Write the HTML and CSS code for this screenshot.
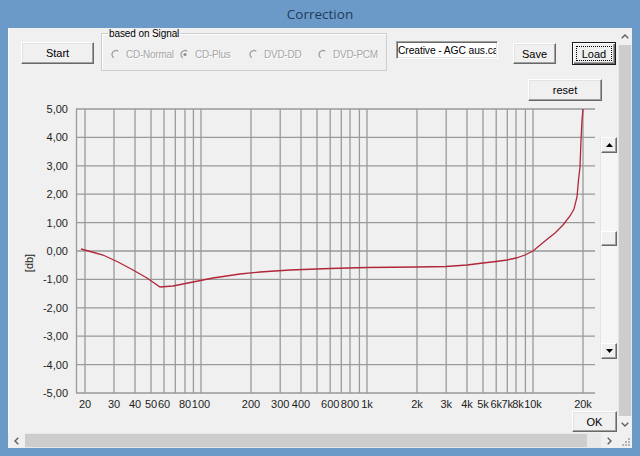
FILE: index.html
```html
<!DOCTYPE html>
<html>
<head>
<meta charset="utf-8">
<title>Correction</title>
<link rel="stylesheet" href="styles.css">
</head>
<body>
<div class="window">
  <div class="titlebar">Correction</div>
  <div class="frame">
    <div class="content">
      <div class="toprow">
        <button class="btn btn-start">Start</button>
        <fieldset class="group">
          <legend>based on Signal</legend>
          <div class="radios">
            <span class="radio"><svg width="12" height="13" viewBox="0 0 12 13"><path d="M8.3 3.2 A4 4 0 1 0 3.7 9.8" fill="none" stroke="#9c9c9c" stroke-width="1.2"/></svg>CD-Normal</span>
            <span class="radio"><svg width="12" height="13" viewBox="0 0 12 13"><path d="M8.3 3.2 A4 4 0 1 0 3.7 9.8" fill="none" stroke="#9c9c9c" stroke-width="1.2"/><circle cx="6" cy="6.5" r="1.6" fill="#8e8e8e"/></svg>CD-Plus</span>
            <span class="radio"><svg width="12" height="13" viewBox="0 0 12 13"><path d="M8.3 3.2 A4 4 0 1 0 3.7 9.8" fill="none" stroke="#9c9c9c" stroke-width="1.2"/></svg>DVD-DD</span>
            <span class="radio"><svg width="12" height="13" viewBox="0 0 12 13"><path d="M8.3 3.2 A4 4 0 1 0 3.7 9.8" fill="none" stroke="#9c9c9c" stroke-width="1.2"/></svg>DVD-PCM</span>
          </div>
        </fieldset>
        <input class="file" type="text" value="Creative - AGC aus.car">
        <button class="btn btn-save">Save</button>
        <button class="btn btn-load"><span class="focus">Load</span></button>
      </div>
      <div class="resetrow">
        <button class="btn btn-reset">reset</button>
      </div>
      <div class="mainrow">
        <svg class="chart" width="592" height="310" viewBox="8 101 592 310">
          <g class="grid" stroke="#9a9a9a" stroke-width="1.3" fill="none">
            <line x1="76" y1="109" x2="595" y2="109"/>
            <line x1="76" y1="137.4" x2="595" y2="137.4"/>
            <line x1="76" y1="165.8" x2="595" y2="165.8"/>
            <line x1="76" y1="194.2" x2="595" y2="194.2"/>
            <line x1="76" y1="222.6" x2="595" y2="222.6"/>
            <line x1="76" y1="251" x2="595" y2="251"/>
            <line x1="76" y1="279.4" x2="595" y2="279.4"/>
            <line x1="76" y1="307.8" x2="595" y2="307.8"/>
            <line x1="76" y1="336.2" x2="595" y2="336.2"/>
            <line x1="76" y1="364.6" x2="595" y2="364.6"/>
            <line x1="76" y1="393" x2="595" y2="393"/>
            <line x1="76.5" y1="109" x2="76.5" y2="393"/>
            <line x1="85" y1="109" x2="85" y2="393"/>
            <line x1="114" y1="109" x2="114" y2="393"/>
            <line x1="135" y1="109" x2="135" y2="393"/>
            <line x1="151" y1="109" x2="151" y2="393"/>
            <line x1="164" y1="109" x2="164" y2="393"/>
            <line x1="175.3" y1="109" x2="175.3" y2="393"/>
            <line x1="185" y1="109" x2="185" y2="393"/>
            <line x1="193.4" y1="109" x2="193.4" y2="393"/>
            <line x1="201" y1="109" x2="201" y2="393"/>
            <line x1="251" y1="109" x2="251" y2="393"/>
            <line x1="280.2" y1="109" x2="280.2" y2="393"/>
            <line x1="301" y1="109" x2="301" y2="393"/>
            <line x1="317" y1="109" x2="317" y2="393"/>
            <line x1="330.2" y1="109" x2="330.2" y2="393"/>
            <line x1="341.3" y1="109" x2="341.3" y2="393"/>
            <line x1="350" y1="109" x2="350" y2="393"/>
            <line x1="359.4" y1="109" x2="359.4" y2="393"/>
            <line x1="367" y1="109" x2="367" y2="393"/>
            <line x1="417" y1="109" x2="417" y2="393"/>
            <line x1="446.2" y1="109" x2="446.2" y2="393"/>
            <line x1="467" y1="109" x2="467" y2="393"/>
            <line x1="483" y1="109" x2="483" y2="393"/>
            <line x1="496.2" y1="109" x2="496.2" y2="393"/>
            <line x1="507.3" y1="109" x2="507.3" y2="393"/>
            <line x1="516" y1="109" x2="516" y2="393"/>
            <line x1="525.4" y1="109" x2="525.4" y2="393"/>
            <line x1="533" y1="109" x2="533" y2="393"/>
            <line x1="583" y1="109" x2="583" y2="393"/>
          </g>
          <g class="ylabels" text-anchor="end">
            <text x="68" y="113">5,00</text>
            <text x="68" y="141.4">4,00</text>
            <text x="68" y="169.8">3,00</text>
            <text x="68" y="198.2">2,00</text>
            <text x="68" y="226.6">1,00</text>
            <text x="68" y="255">0,00</text>
            <text x="68" y="283.4">-1,00</text>
            <text x="68" y="311.8">-2,00</text>
            <text x="68" y="340.2">-3,00</text>
            <text x="68" y="368.6">-4,00</text>
            <text x="68" y="397">-5,00</text>
          </g>
          <text class="unit" transform="translate(33,263) rotate(-90)" text-anchor="middle">[db]</text>
          <g class="xlabels" text-anchor="middle">
            <text x="85" y="408">20</text>
            <text x="114" y="408">30</text>
            <text x="135" y="408">40</text>
            <text x="151" y="408">50</text>
            <text x="164" y="408">60</text>
            <text x="185" y="408">80</text>
            <text x="201" y="408">100</text>
            <text x="251" y="408">200</text>
            <text x="280.2" y="408">300</text>
            <text x="301" y="408">400</text>
            <text x="330.2" y="408">600</text>
            <text x="350" y="408">800</text>
            <text x="367" y="408">1k</text>
            <text x="417" y="408">2k</text>
            <text x="446.2" y="408">3k</text>
            <text x="467" y="408">4k</text>
            <text x="483" y="408">5k</text>
            <text x="496.2" y="408">6k</text>
            <text x="507.3" y="408">7k</text>
            <text x="518" y="408">8k</text>
            <text x="533" y="408">10k</text>
            <text x="583" y="408">20k</text>
          </g>
          <polyline class="curve" fill="none" stroke="#b3263a" stroke-width="1.3" points="81,249 92,252 103,255 118,262 133,270 147,278 160,287 173,286 193,282 213,278 240,274 260,272 290,270 330,268.5 367,267.5 417,267 446,266.5 467,265 483,263 496,261.5 507,260 516,258 525,255 533,251 545,241 555,233 563,225 570,216 574,209 577,197 578.5,180 580,167 581,140 582,120 583,109"/>
        </svg>
        <div class="sb-inner">
          <div class="sb-btn"><svg width="7" height="4" viewBox="0 0 7 4"><path d="M0 4 L3.5 0 L7 4 Z" fill="#000"/></svg></div>
          <div class="sb-track">
            <div class="sb-thumb"></div>
          </div>
          <div class="sb-btn"><svg width="7" height="4" viewBox="0 0 7 4"><path d="M0 0 L3.5 4 L7 0 Z" fill="#000"/></svg></div>
        </div>
      </div>
      <div class="okrow">
        <button class="btn btn-ok">OK</button>
      </div>
    </div>
    <div class="vscroll">
      <div class="arrow"><svg width="8" height="5" viewBox="0 0 8 5"><path d="M0.7 4.3 L4 1 L7.3 4.3" fill="none" stroke="#606060" stroke-width="1.4"/></svg></div>
      <div class="vthumb"></div>
      <div class="arrow"><svg width="8" height="5" viewBox="0 0 8 5"><path d="M0.7 0.7 L4 4 L7.3 0.7" fill="none" stroke="#606060" stroke-width="1.4"/></svg></div>
    </div>
    <div class="hscroll">
      <div class="harrow"><svg width="5" height="8" viewBox="0 0 5 8"><path d="M4.3 0.7 L1 4 L4.3 7.3" fill="none" stroke="#606060" stroke-width="1.4"/></svg></div>
      <div class="hthumb"></div>
      <div class="htrack"></div>
      <div class="harrow"><svg width="5" height="8" viewBox="0 0 5 8"><path d="M0.7 0.7 L4 4 L0.7 7.3" fill="none" stroke="#606060" stroke-width="1.4"/></svg></div>
    </div>
    <div class="grip"><svg width="14" height="15" viewBox="0 0 14 15" fill="#b4b4b4"><rect x="10" y="5" width="2" height="2"/><rect x="7" y="8" width="2" height="2"/><rect x="10" y="8" width="2" height="2"/><rect x="4" y="11" width="2" height="2"/><rect x="7" y="11" width="2" height="2"/><rect x="10" y="11" width="2" height="2"/></svg></div>
  </div>
</div>
</body>
</html>
```

FILE: styles.css
```css
* { box-sizing: border-box; }

html, body {
  margin: 0;
  padding: 0;
}

body {
  width: 640px;
  height: 456px;
  overflow: hidden;
  background: #6c9ac8;
  font-family: "Liberation Sans", Arial, sans-serif;
  font-size: 11px;
  color: #000;
}

.window {
  display: flex;
  flex-direction: column;
  width: 640px;
  height: 456px;
  padding: 0 8px 8px 8px;
}

.titlebar {
  height: 28px;
  display: flex;
  align-items: center;
  justify-content: center;
  font-family: "Open Sans", "Noto Sans", sans-serif;
  font-size: 13.5px;
  color: #1f3a5c;
  padding-bottom: 1px;
}

.frame {
  display: grid;
  grid-template-columns: 610px 14px;
  grid-template-rows: 405px 15px;
}

.content {
  background: #f0f0f0;
  display: flex;
  flex-direction: column;
  box-shadow: inset 1px 0 #fafafa;
}

/* ---------- top row ---------- */
.toprow {
  height: 43px;
  display: flex;
  align-items: flex-start;
  padding-left: 13px;
}

.btn {
  font-family: "Liberation Sans", Arial, sans-serif;
  font-size: 11px;
  color: #000;
  background: #f0f0f0;
  border-style: solid;
  border-width: 1px;
  border-color: #fff #696969 #696969 #fff;
  box-shadow: inset -1px -1px #a0a0a0, inset 1px 1px #e3e3e3;
  padding: 0;
  display: flex;
  align-items: center;
  justify-content: center;
}

.btn-start {
  width: 73px;
  height: 22px;
  margin-top: 14px;
}

.group {
  margin: 0 0 0 7px;
  padding: 0 0 0 8px;
  width: 286px;
  height: 43px;
  border: 1px solid #cdcdcd;
  box-shadow: inset 1px 1px #fff;
  min-width: 0;
}

.group legend {
  font-size: 10px;
  line-height: 11px;
  letter-spacing: -0.1px;
  padding: 0 1px;
  margin-left: -2px;
  color: #000;
}

.radios {
  display: flex;
  align-items: center;
  margin-top: 8px;
  height: 14px;
}

.radio {
  display: flex;
  align-items: center;
  width: 69px;
  font-size: 10px;
  letter-spacing: -0.25px;
  color: #a7a7a7;
  text-shadow: 1px 1px 0 #fff;
  white-space: nowrap;
}

.radio svg {
  margin-right: 4px;
  flex: none;
}

.file {
  margin: 13px 0 0 9px;
  width: 102px;
  height: 18px;
  padding: 0 1px;
  font-family: "Liberation Sans", Arial, sans-serif;
  font-size: 10.3px;
  letter-spacing: -0.1px;
  color: #000;
  background: #fff;
  border-style: solid;
  border-width: 1px;
  border-color: #a0a0a0 #fff #fff #a0a0a0;
  box-shadow: inset 1px 1px #696969, inset -1px -1px #e3e3e3;
  outline: none;
}

.btn-save {
  width: 43px;
  height: 21px;
  margin: 15px 0 0 15px;
}

.btn-load {
  position: relative;
  width: 44px;
  height: 23px;
  margin: 14px 0 0 16px;
  border: 1px solid #1a1a1a;
  box-shadow: inset 1px 1px #fff, inset -1px -1px #696969, inset -2px -2px #a0a0a0;
}

.btn-load .focus {
  display: flex;
  align-items: center;
  justify-content: center;
  width: 36px;
  height: 15px;
  border: 1px dotted #000;
}

/* ---------- reset ---------- */
.resetrow {
  display: flex;
  justify-content: flex-end;
  padding-right: 16px;
  margin-top: 8px;
  height: 22px;
}

.btn-reset {
  width: 74px;
  height: 22px;
}

/* ---------- chart ---------- */
.mainrow {
  height: 310px;
  display: flex;
  align-items: flex-start;
}

.chart {
  display: block;
  flex: none;
}

.chart text {
  font-family: "Liberation Sans", Arial, sans-serif;
  font-size: 11px;
  fill: #1e1e1e;
}

.sb-inner {
  margin-top: 36px;
  width: 17px;
  height: 222px;
  display: flex;
  flex-direction: column;
  background: #f6f6f6;
  border-left: 1px solid #e4e4e4;
}

.sb-btn {
  height: 16px;
  flex: none;
  display: flex;
  align-items: center;
  justify-content: center;
  background: #f0f0f0;
  border-style: solid;
  border-width: 1px;
  border-color: #fff #696969 #696969 #fff;
  box-shadow: inset -1px -1px #a0a0a0;
}

.sb-track {
  flex: 1;
}

.sb-thumb {
  margin-top: 78px;
  height: 15px;
  background: #f0f0f0;
  border-style: solid;
  border-width: 1px;
  border-color: #fff #696969 #696969 #fff;
  box-shadow: inset -1px -1px #a0a0a0;
}

.okrow {
  height: 22px;
  display: flex;
  justify-content: flex-end;
  padding-right: 1px;
}

.btn-ok {
  width: 45px;
  height: 21px;
}

/* ---------- window scrollbars ---------- */
.vscroll {
  display: flex;
  flex-direction: column;
  background: #e8e8e8;
}

.vscroll .arrow {
  height: 17px;
  flex: none;
  display: flex;
  align-items: center;
  justify-content: center;
  background: #f0f0f0;
}

.vthumb {
  flex: 1;
  margin: 0 1px;
  background: #cdcdcd;
}

.hscroll {
  display: flex;
  background: #e8e8e8;
}

.harrow {
  width: 17px;
  flex: none;
  display: flex;
  align-items: center;
  justify-content: center;
  background: #f0f0f0;
}

.hthumb {
  width: 562px;
  margin: 1px 0;
  background: #cdcdcd;
}

.htrack {
  flex: 1;
}

.grip {
  background: #f0f0f0;
}

.grip svg {
  display: block;
}
```
